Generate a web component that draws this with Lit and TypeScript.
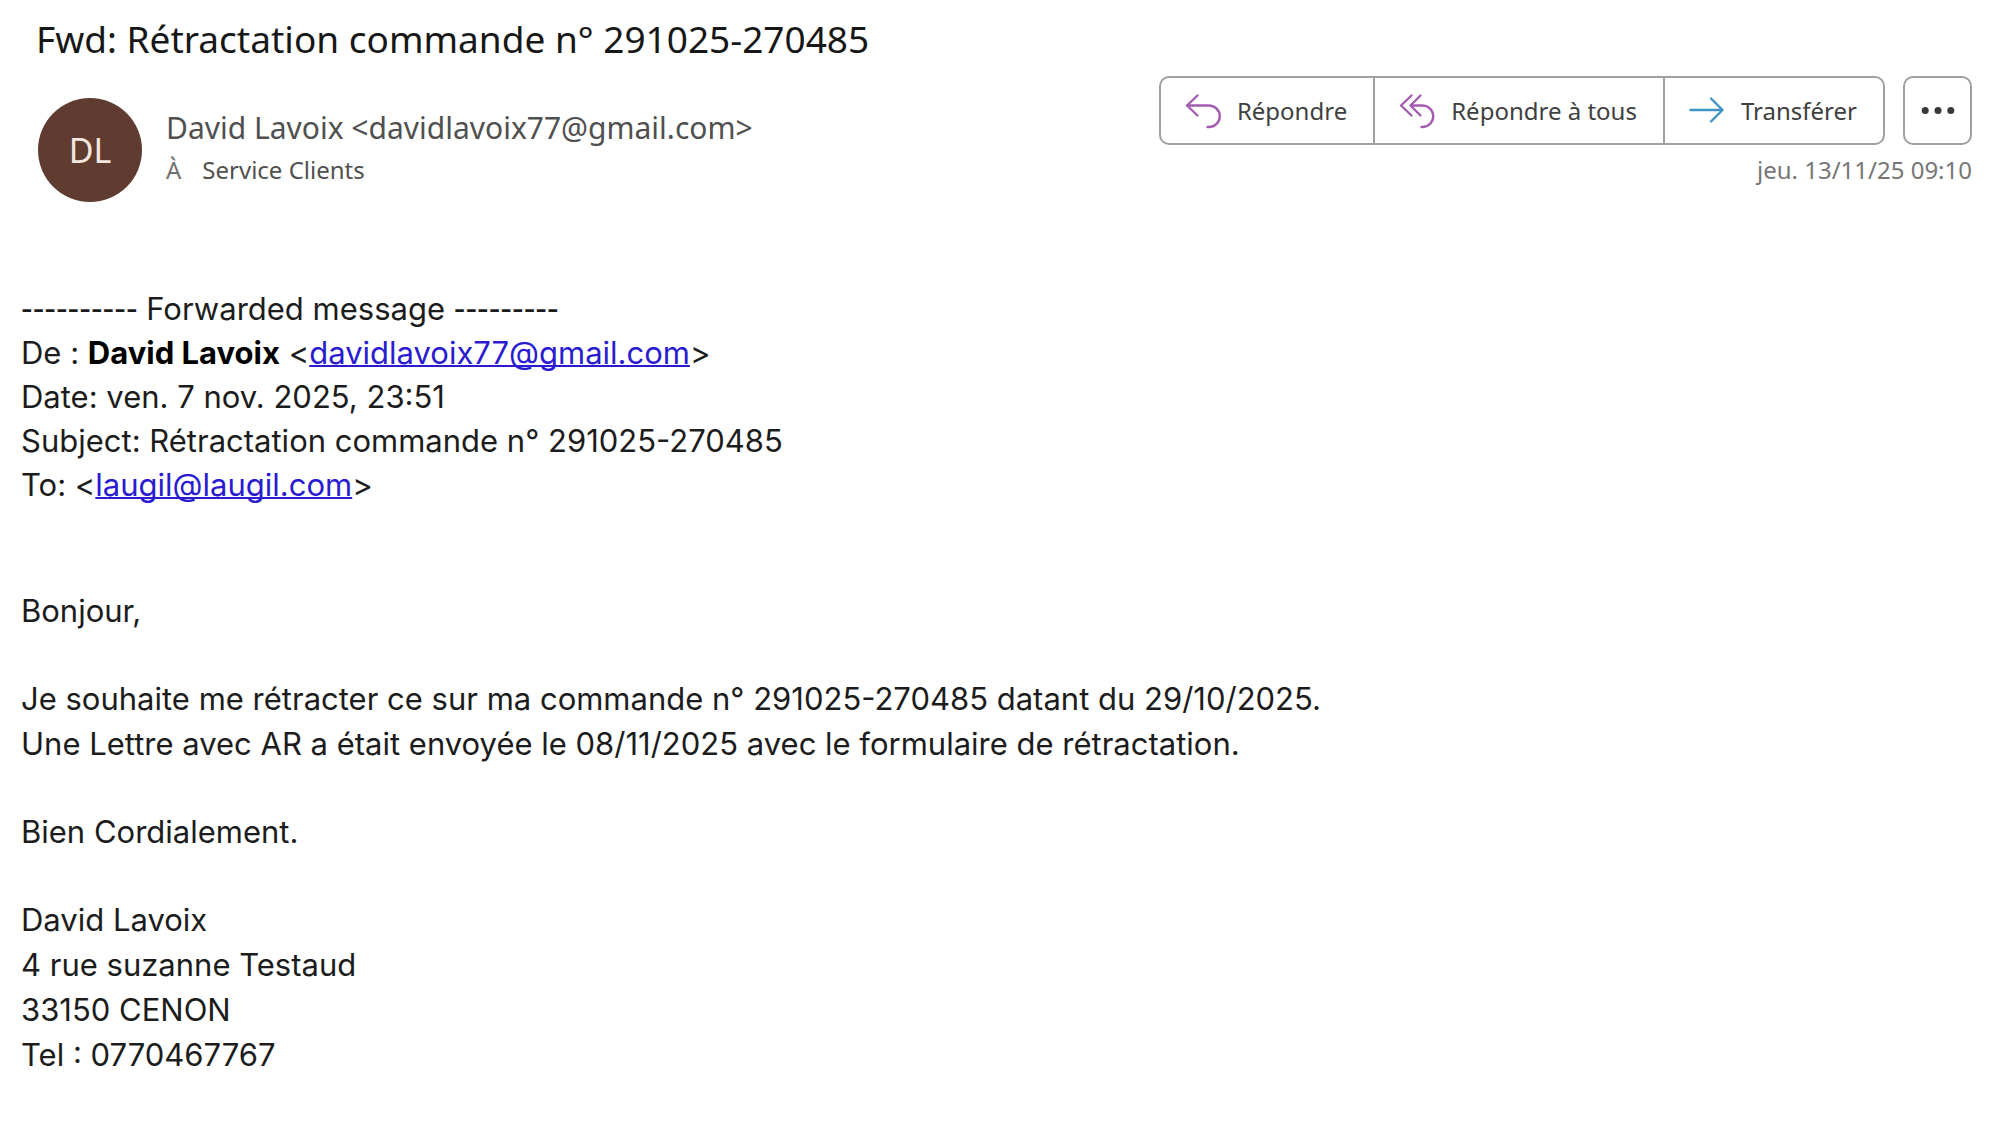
import { LitElement, html, css, svg } from "lit";
import { customElement } from "lit/decorators.js";

const replyIcon = svg`
  <svg class="icon reply" viewBox="0 0 36 36" aria-hidden="true">
    <path d="M12.5 2.5 2 12.5 12.5 22.5" />
    <path d="M2.5 12.5H24A10.7 10.7 0 0 1 24 34H22.5" />
  </svg>`;

const replyAllIcon = svg`
  <svg class="icon reply" viewBox="0 0 36 36" aria-hidden="true">
    <path d="M12.5 2.5 2 12.5 12.5 22.5" />
    <path d="M21.5 2.5 11.5 12.5 21.5 22.5" />
    <path d="M12 12.5H23A10.7 10.7 0 0 1 24 34H22.5" />
  </svg>`;

const forwardIcon = svg`
  <svg class="icon forward" viewBox="0 0 36 36" aria-hidden="true">
    <path d="M1.5 17H33" />
    <path d="M22 5.5 33.5 17 22 28.500" />
  </svg>`;

const moreIcon = svg`
  <svg class="icon more-dots" viewBox="0 0 36 36" aria-hidden="true">
    <circle cx="5.200" cy="17.500" r="3.500" />
    <circle cx="18" cy="17.500" r="3.500" />
    <circle cx="30.800" cy="17.500" r="3.500" />
  </svg>`;

@customElement("app-root")
export class AppRoot extends LitElement {
  static styles = css`
    :host {
      display: block;
      min-height: 100vh;
      background: #fff;
      font-family: "Noto Sans", "Open Sans", sans-serif;
      color: #505050;
    }
    .subject {
      margin: 0;
      padding: 14px 36px 12px;
      font-size: 37px;
      line-height: 50px;
      font-weight: 400;
      color: #171717;
    }
    .header {
      display: flex;
      align-items: flex-start;
      gap: 24px;
      padding: 0 28px 0 38px;
    }
    .avatar {
      display: flex;
      align-items: center;
      justify-content: center;
      flex: none;
      width: 104px;
      height: 104px;
      margin-top: 22px;
      border-radius: 50%;
      background: #603b30;
      color: #f3e6df;
      font-size: 34px;
    }
    .sender {
      flex: 1;
      padding-top: 30px;
    }
    .name {
      font-size: 30px;
      line-height: 44px;
    }
    .recipient {
      display: flex;
      gap: 21px;
      font-size: 24px;
      line-height: 40px;
    }
    .label {
      color: #707070;
    }
    .side {
      display: flex;
      flex-direction: column;
      align-items: flex-end;
      gap: 5px;
    }
    .actions {
      display: flex;
      gap: 18px;
    }
    .group {
      display: flex;
      border: 2px solid #a0a0a0;
      border-radius: 10px;
    }
    .action {
      display: flex;
      align-items: center;
      gap: 16px;
      height: 65px;
      margin: 0;
      padding: 0 26px 0 24px;
      border: 0;
      background: none;
      color: #404040;
      font: inherit;
      font-size: 24px;
    }
    .action + .action {
      border-left: 2px solid #a0a0a0;
    }
    .more {
      display: flex;
      align-items: center;
      justify-content: center;
      width: 69px;
      height: 69px;
      padding: 0;
      border: 2px solid #a0a0a0;
      border-radius: 10px;
      background: none;
    }
    .icon {
      width: 36px;
      height: 36px;
      fill: none;
      stroke-width: 2.4;
      stroke-linecap: round;
      stroke-linejoin: round;
    }
    .reply {
      stroke: #a35cb0;
    }
    .forward {
      stroke: #3f94c4;
    }
    .more-dots {
      fill: #383838;
    }
    .date {
      font-size: 24px;
      line-height: 40px;
      color: #767676;
    }
    .body {
      display: flex;
      flex-direction: column;
      gap: 43px;
      padding: 85px 21px 40px;
      font-family: Inter, "Liberation Sans", sans-serif;
      font-size: 31px;
      line-height: 45px;
      color: #1c1c1c;
    }
    .body p {
      margin: 0;
    }
    .body .forwarded {
      padding-bottom: 38px;
      line-height: 44px;
    }
    .dashes {
      font-family: "Liberation Sans", sans-serif;
      font-size: 35px;
      line-height: 1;
    }
    .strong {
      color: #000;
    }
    .link {
      color: #2a1bd0;
      text-decoration: underline;
      text-decoration-thickness: 2px;
      text-decoration-skip-ink: none;
    }
  `;

  render() {
    return html`
      <main>
        <h1 class="subject">Fwd: Rétractation commande n° 291025-270485</h1>
        <header class="header">
          <div class="avatar">DL</div>
          <div class="sender">
            <div class="name">David Lavoix &lt;davidlavoix77@gmail.com&gt;</div>
            <div class="recipient"><span class="label">À</span><span>Service Clients</span></div>
          </div>
          <div class="side">
            <div class="actions">
              <div class="group">
                <button class="action" type="button">${replyIcon}<span>Répondre</span></button>
                <button class="action" type="button">${replyAllIcon}<span>Répondre à tous</span></button>
                <button class="action" type="button">${forwardIcon}<span>Transférer</span></button>
              </div>
              <button class="more" type="button" aria-label="Plus">${moreIcon}</button>
            </div>
            <time class="date" datetime="2025-11-13T09:10">jeu. 13/11/25 09:10</time>
          </div>
        </header>
        <article class="body">
          <p class="forwarded">
            <span class="dashes">----------</span> Forwarded message <span class="dashes">---------</span><br />
            De : <b class="strong">David Lavoix</b> &lt;<a class="link" href="mailto:davidlavoix77@gmail.com">davidlavoix77@gmail.com</a>&gt;<br />
            Date: ven. 7 nov. 2025, 23:51<br />
            Subject: Rétractation commande n° 291025-270485<br />
            To: &lt;<a class="link" href="mailto:laugil@laugil.com">laugil@laugil.com</a>&gt;
          </p>
          <p>Bonjour,</p>
          <p>
            Je souhaite me rétracter ce sur ma commande n° 291025-270485 datant du 29/10/2025.<br />
            Une Lettre avec AR a était envoyée le 08/11/2025 avec le formulaire de rétractation.
          </p>
          <p>Bien Cordialement.</p>
          <p>
            David Lavoix<br />
            4 rue suzanne Testaud<br />
            33150 CENON<br />
            Tel : 0770467767
          </p>
        </article>
      </main>
    `;
  }
}
